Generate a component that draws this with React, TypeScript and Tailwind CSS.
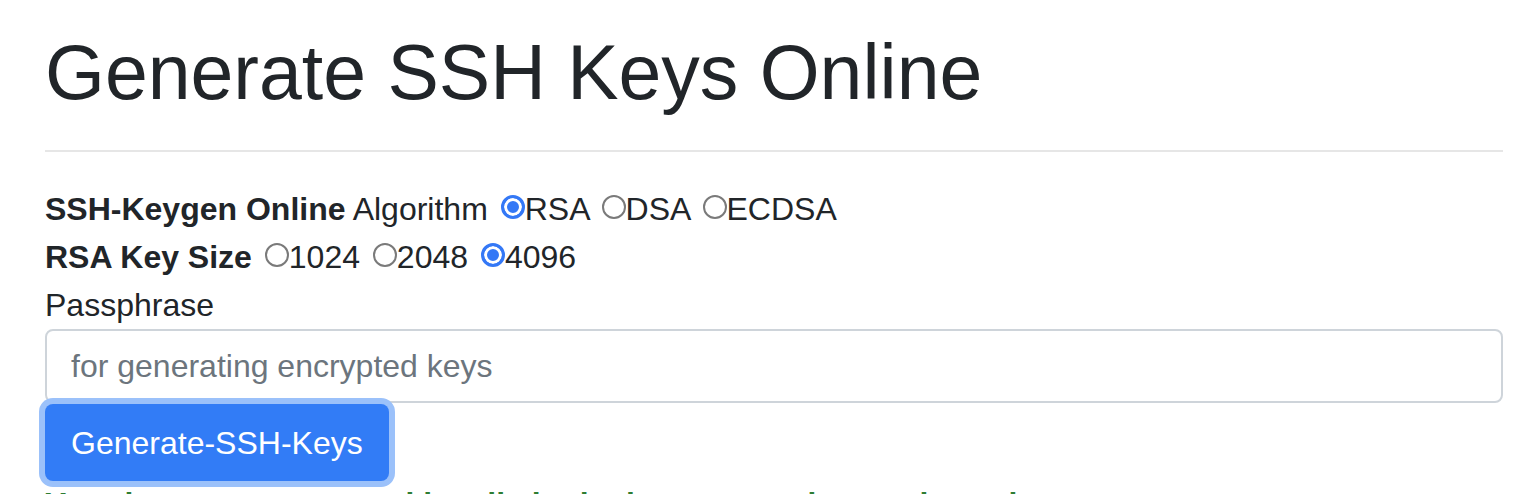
import React from 'react';

function Radio({ checked }: { checked?: boolean }) {
  if (checked) {
    return (
      <span className="inline-block w-[24px] h-[24px] rounded-full border-[3px] border-[#3478f6] bg-[#3478f6] shadow-[inset_0_0_0_3px_white] align-[1px] ml-[4px]" />
    );
  }
  return (
    <span className="inline-block w-[24px] h-[24px] rounded-full border-2 border-[#7a7a7a] bg-white align-[1px] ml-[4px]" />
  );
}

export default function App() {
  return (
    <div className="h-screen overflow-hidden bg-white text-[#212529] font-['Liberation_Sans',Arial,sans-serif]">
      <div className="pl-[45px] pr-[25px] pt-[24px]">
        <h1 className="text-[77px] leading-[96px] font-normal">Generate SSH Keys Online</h1>
        <hr className="mt-[30px] mb-[33px] border-0 border-t-2 border-[#e6e6e6]" />

        <form className="text-[32px] leading-[48px]">
          <div>
            <b className="font-bold">SSH-Keygen Online</b> Algorithm <Radio checked />RSA <Radio />DSA <Radio />ECDSA
          </div>
          <div>
            <b className="font-bold">RSA Key Size</b> <Radio />1024 <Radio />2048 <Radio checked />4096
          </div>
          <label className="block">Passphrase</label>
          <input
            type="text"
            placeholder="for generating encrypted keys"
            className="block w-full h-[74px] px-[24px] border-2 border-[#ced4da] rounded-[8px] text-[32px] placeholder:text-[#6c757d] outline-none"
          />
          <button
            type="button"
            className="mt-px h-[77px] px-[26px] rounded-[8px] bg-[#327cf6] text-white text-[32px] shadow-[0_0_0_6px_#9bc1fa]"
          >
            Generate-SSH-Keys
          </button>
          <p className="mt-[7px] text-[32px] leading-[32px] font-bold text-[#2d7d32]">
            Your keys are generated locally in the browser and never leave it.
          </p>
        </form>
      </div>
    </div>
  );
}
